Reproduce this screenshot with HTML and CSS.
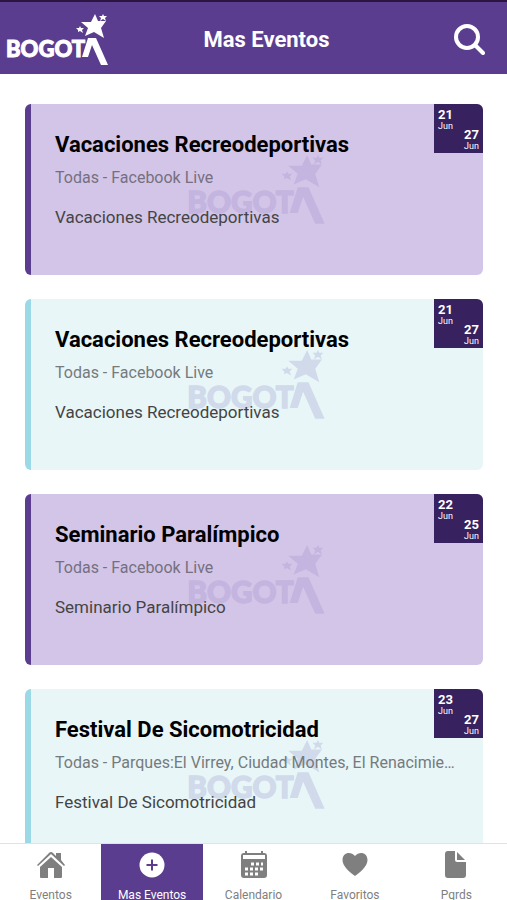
FILE: index.html
```html
<!DOCTYPE html>
<html lang="es">
<head>
    <meta charset="UTF-8">
    <meta name="viewport" content="width=device-width, initial-scale=1.0">
    <title>Mas Eventos</title>
    <link rel="stylesheet" href="styles.css">
</head>
<body>
    <svg class="defs" aria-hidden="true">
        <symbol id="logo" viewBox="0 0 102 52" overflow="visible">
            <text class="logo-text" x="0" y="43">BOGOT</text>
            <path d="M76 43 82 24H90L102 51H95L86 31 82 43Z"/>
            <path d="M89 0 92 7 100 7 95 14 98 24 88 18 79 22 82 14 75 8 85 8Z"/>
            <path d="M97 0 98 2 101 2 99 4 100 7 97 5 94 7 95 4 93 2 96 2Z"/>
            <path d="M74 12 75 14 78 14 76 16 77 19 74 17 72 18 72 16 70 14 73 14Z"/>
        </symbol>
    </svg>

    <header class="header">
        <svg class="logo" role="img" aria-label="Bogotá"><use href="#logo"/></svg>
        <h1>Mas Eventos</h1>
        <button class="search-btn" type="button" aria-label="Buscar">
            <svg width="32" height="32" viewBox="0 0 32 32" fill="none" stroke="#fff" stroke-width="4" stroke-linecap="round">
                <circle cx="14" cy="13" r="11"/>
                <path d="M22 21 30 29"/>
            </svg>
        </button>
    </header>

    <main class="events">
        <article class="card purple">
            <svg class="watermark" aria-hidden="true"><use href="#logo"/></svg>
            <h2>Vacaciones Recreodeportivas</h2>
            <p class="place">Todas - Facebook Live</p>
            <p class="detail">Vacaciones Recreodeportivas</p>
            <div class="dates">
                <div class="date"><b>21</b><span>Jun</span></div>
                <div class="date end"><b>27</b><span>Jun</span></div>
            </div>
        </article>
        <article class="card blue">
            <svg class="watermark" aria-hidden="true"><use href="#logo"/></svg>
            <h2>Vacaciones Recreodeportivas</h2>
            <p class="place">Todas - Facebook Live</p>
            <p class="detail">Vacaciones Recreodeportivas</p>
            <div class="dates">
                <div class="date"><b>21</b><span>Jun</span></div>
                <div class="date end"><b>27</b><span>Jun</span></div>
            </div>
        </article>
        <article class="card purple">
            <svg class="watermark" aria-hidden="true"><use href="#logo"/></svg>
            <h2>Seminario Paralímpico</h2>
            <p class="place">Todas - Facebook Live</p>
            <p class="detail">Seminario Paralímpico</p>
            <div class="dates">
                <div class="date"><b>22</b><span>Jun</span></div>
                <div class="date end"><b>25</b><span>Jun</span></div>
            </div>
        </article>
        <article class="card blue">
            <svg class="watermark" aria-hidden="true"><use href="#logo"/></svg>
            <h2>Festival De Sicomotricidad</h2>
            <p class="place">Todas - Parques:El Virrey, Ciudad Montes, El Renacimiento</p>
            <p class="detail">Festival De Sicomotricidad</p>
            <div class="dates">
                <div class="date"><b>23</b><span>Jun</span></div>
                <div class="date end"><b>27</b><span>Jun</span></div>
            </div>
        </article>
    </main>

    <nav class="tabs">
        <a href="#eventos">
            <svg viewBox="0 0 30 30">
                <path d="M4 17 15 7 26 17V27Q26 28 25 28H18V18H12V28H5Q4 28 4 27Z"/>
                <path d="M1 15 13 3Q15 1 17 3L20 6V3H25V10L29 15 28 16 15 4 2 16Z"/>
            </svg>
            <span>Eventos</span>
        </a>
        <a href="#mas-eventos" class="active" aria-current="page">
            <svg viewBox="0 0 30 30">
                <circle cx="15" cy="15" r="12.5"/>
                <path d="M15 9.500V20.500M9.500 15H20.500" stroke="#5b3d8f" stroke-width="2"/>
            </svg>
            <span>Mas Eventos</span>
        </a>
        <a href="#calendario">
            <svg viewBox="0 0 30 30">
                <path d="M5 3H6V1H8V3H22V1H24V3H25Q28 3 28 6V25Q28 28 25 28H5Q2 28 2 25V6Q2 3 5 3Z"/>
                <path d="M4 5H26V9H4Z" fill="#fff"/>
                <path d="M12 14H24M6 19H24M6 24H20" stroke="#fff" stroke-width="3" stroke-dasharray="3 2" fill="none"/>
            </svg>
            <span>Calendario</span>
        </a>
        <a href="#favoritos">
            <svg viewBox="0 0 30 30">
                <path d="M15 26C11 23 2.500 17 2.500 10C2.500 2 11 1 15 6C19 1 27.500 2 27.500 10C27.500 17 19 23 15 26Z"/>
            </svg>
            <span>Favoritos</span>
        </a>
        <a href="#pqrds">
            <svg viewBox="0 0 30 30">
                <path d="M7 1H14V10Q14 12 16 12H25V25Q25 28 22 28H7Q4 28 4 25V4Q4 1 7 1Z"/>
                <path d="M16 2 24 10H16Z"/>
            </svg>
            <span>Pqrds</span>
        </a>
    </nav>
</body>
</html>
```
FILE: styles.css
```css
* {
    box-sizing: border-box;
}
body {
    margin: 0;
    height: 100vh;
    display: flex;
    flex-direction: column;
    font-family: Roboto, "Liberation Sans", sans-serif;
    background: #fff;
}
h1, h2, p {
    margin: 0;
}
.defs {
    position: absolute;
    width: 0;
    height: 0;
}
.logo-text {
    font-family: Lato, sans-serif;
    font-weight: 900;
    font-size: 22px;
    stroke: currentColor;
    stroke-width: 1px;
}

/* header */
.header {
    flex: none;
    display: flex;
    align-items: center;
    height: 74px;
    padding: 3px 22px 0 6px;
    border-top: 2px solid #2b1540;
    background: #5b3d8f;
    color: #fff;
}
.logo {
    width: 102px;
    height: 52px;
    fill: currentColor;
    overflow: visible;
}
.header h1 {
    flex: 1;
    text-align: center;
    font-size: 22px;
    line-height: 30px;
}
.search-btn {
    padding: 0 0 0 28px;
    border: none;
    background: none;
    cursor: pointer;
}
.search-btn svg {
    display: block;
}

/* event list */
.events {
    flex: 1;
    min-height: 0;
    display: flex;
    flex-direction: column;
    gap: 24px;
    padding: 30px 24px 30px 25px;
    overflow-y: auto;
    scrollbar-width: none;
}
.card {
    position: relative;
    flex: none;
    min-height: 171px;
    padding: 26px 24px;
    border-left: 6px solid #5b3d8f;
    border-radius: 6px;
}
.card.purple {
    background-color: #d3c5e8;
}
.card.blue {
    background-color: #e8f6f8;
    border-left-color: #9bd9e6;
}
.watermark {
    position: absolute;
    top: 51px;
    left: calc(50% - 70px);
    width: 138px;
    height: 70px;
    color: #c3b5df;
    fill: currentColor;
    overflow: visible;
}
.blue .watermark {
    color: #d0daea;
}
.card h2, .card p {
    position: relative;
}
.card h2 {
    font-size: 22px;
    line-height: 30px;
    color: #000;
}
.place {
    margin-top: 8px;
    font-size: 16px;
    line-height: 20px;
    color: #757080;
    white-space: nowrap;
    overflow: hidden;
    text-overflow: ellipsis;
}
.blue .place {
    color: #757b7d;
}
.card .detail {
    margin-top: 19px;
    font-size: 17px;
    line-height: 20px;
    color: #444;
}
.dates {
    position: absolute;
    top: 0;
    right: 0;
    width: 49px;
    height: 49px;
    padding: 5px 4px;
    border-top-right-radius: 6px;
    background: #38215f;
    color: #fff;
}
.date {
    width: max-content;
    font-size: 9px;
    line-height: 10px;
}
.date.end {
    margin-left: auto;
    margin-top: -2px;
}
.date b, .date span {
    display: block;
}
.date b {
    font-size: 13px;
    line-height: 12px;
}

/* bottom tabs */
.tabs {
    flex: none;
    display: flex;
    height: 57px;
    border-top: 1px solid #e2e2e2;
    overflow: hidden;
    background: #fff;
}
.tabs a {
    flex: 1;
    display: flex;
    flex-direction: column;
    align-items: center;
    padding-top: 6px;
    color: #7f7f7f;
    font-size: 12px;
    line-height: 16px;
    text-decoration: none;
}
.tabs svg {
    flex: none;
    width: 30px;
    height: 30px;
    margin-bottom: 7px;
    fill: currentColor;
}
.tabs .active {
    background: #5b3d8f;
    color: #fff;
}
```
